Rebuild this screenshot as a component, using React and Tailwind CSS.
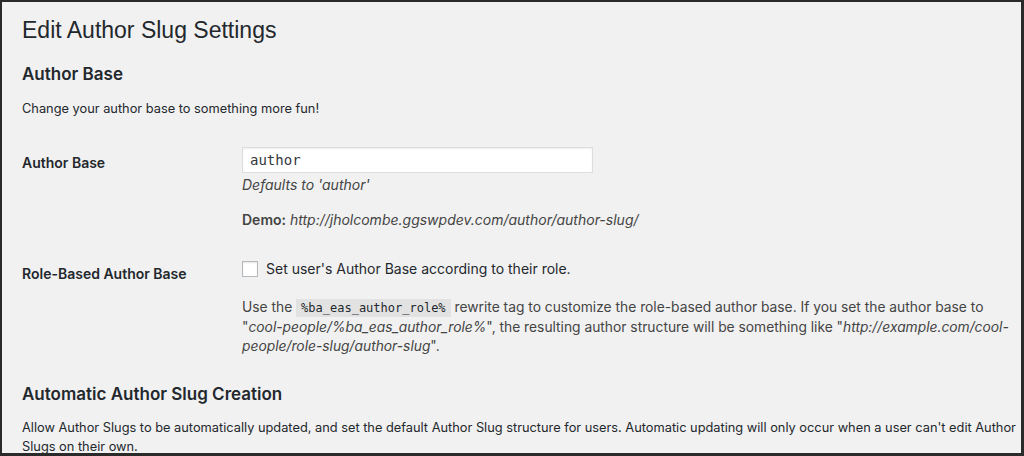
export default function App() {
    return (
        <div
            className="w-[1024px] h-[456px] overflow-hidden bg-[#f1f1f1] border-t-2 border-l-2 border-r-[3px] border-b-[3px] border-[#2a2a2a] text-[#23282d]"
            style={{ fontFamily: 'Inter, "Liberation Sans", Arial, sans-serif' }}
        >
            <div className="pl-[20px] pr-[4px]">
                {/* Page title */}
                <h1
                    className="text-[23px] leading-[29px] font-normal pt-[14px]"
                    style={{ fontFamily: '"Liberation Sans", Arial, sans-serif' }}
                >
                    Edit Author Slug Settings
                </h1>

                {/* Author Base section */}
                <h2 className="text-[17px] leading-[22px] font-semibold mt-[18px]">Author Base</h2>
                <p className="text-[12.8px] leading-[18px] mt-[15px]">Change your author base to something more fun!</p>

                <div className="flex mt-[29px]">
                    <div className="w-[220px] shrink-0 pt-[6px] text-[14px] leading-[20px] font-semibold">Author Base</div>
                    <div className="flex-1">
                        <input
                            type="text"
                            defaultValue="author"
                            className="w-[351px] h-[26px] px-[7px] bg-white border border-[#dddddd] shadow-[inset_0_1px_2px_rgba(0,0,0,0.07)] text-[14px] text-[#32373c] outline-none"
                            style={{ fontFamily: '"DejaVu Sans Mono", "Liberation Mono", monospace' }}
                        />
                        <p className="text-[14px] leading-[20px] italic text-[#444] mt-[2px]">Defaults to 'author'</p>
                        <p className="text-[14px] leading-[20px] text-[#444] mt-[15px]">
                            <span className="font-semibold not-italic">Demo:</span>{' '}
                            <span className="italic">http://jholcombe.ggswpdev.com/author/author-slug/</span>
                        </p>
                    </div>
                </div>

                <div className="flex mt-[29px]">
                    <div className="w-[220px] shrink-0 pt-[5px] text-[14px] leading-[20px] font-semibold">Role-Based Author Base</div>
                    <div className="flex-1 text-[14px] text-[#444]">
                        <label className="flex items-center gap-[8px] leading-[20px]">
                            <span className="w-[16px] h-[16px] bg-white border border-[#b4b9be] shadow-[inset_0_1px_2px_rgba(0,0,0,0.1)] shrink-0" />
                            <span className="text-[#23282d]">Set user's Author Base according to their role.</span>
                        </label>
                        <p className="text-[13.8px] leading-[19px] mt-[19px]">
                            Use the{' '}
                            <code
                                className="bg-[#e2e2e2] px-[5px] py-[2px] text-[12px] text-[#23282d]"
                                style={{ fontFamily: '"DejaVu Sans Mono", "Liberation Mono", monospace' }}
                            >
                                %ba_eas_author_role%
                            </code>{' '}
                            rewrite tag to customize the role-based author base. If you set the author base to "
                            <span className="italic">cool-people/%ba_eas_author_role%</span>", the resulting author structure will be something like "
                            <span className="italic">http://example.com/cool-people/role-slug/author-slug</span>".
                        </p>
                    </div>
                </div>

                {/* Automatic section */}
                <h2 className="text-[17px] leading-[22px] font-semibold mt-[27px]">Automatic Author Slug Creation</h2>
                <p className="text-[12.8px] leading-[19px] mt-[13px]">
                    Allow Author Slugs to be automatically updated, and set the default Author Slug structure for users. Automatic updating will only occur when a user can't edit Author Slugs on their own.
                </p>
            </div>
        </div>
    );
}
